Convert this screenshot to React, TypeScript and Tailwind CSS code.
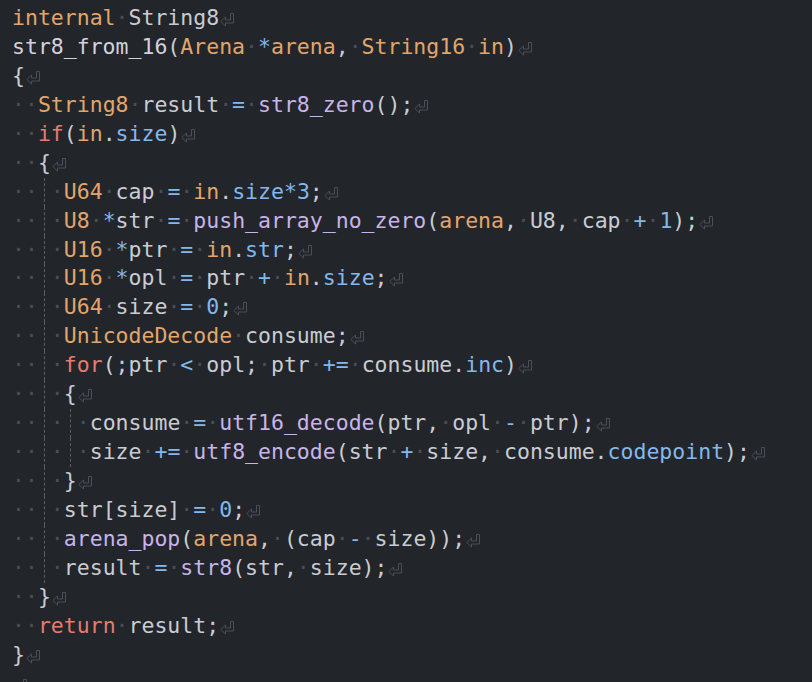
import React from "react";

type Seg = [string, string?];

const COLORS: Record<string, string> = {
  d: "text-[#c9ccd3]",
  h: "text-[#d3d2dc]",
  t: "text-[#e2a56c]",
  k: "text-[#e57c6f]",
  o: "text-[#84b8ec]",
  n: "text-[#84b8ec]",
  m: "text-[#84b8ec]",
  f: "text-[#c8b4e8]",
};

const LINES: Seg[][] = [
  [["internal", "t"], [" "], ["String8", "d"]],
  [["str8_from_16", "h"], ["(", "d"], ["Arena", "t"], [" "], ["*", "o"], ["arena", "t"], [",", "d"], [" "], ["String16", "t"], [" "], ["in", "t"], [")", "d"]],
  [["{", "d"]],
  [["  "], ["String8", "t"], [" "], ["result", "d"], [" "], ["=", "o"], [" "], ["str8_zero", "f"], ["();", "d"]],
  [["  "], ["if", "k"], ["(", "d"], ["in", "t"], [".", "d"], ["size", "m"], [")", "d"]],
  [["  "], ["{", "d"]],
  [["    "], ["U64", "t"], [" "], ["cap", "d"], [" "], ["=", "o"], [" "], ["in", "t"], [".", "d"], ["size", "m"], ["*", "o"], ["3", "n"], [";", "d"]],
  [["    "], ["U8", "t"], [" "], ["*", "o"], ["str", "d"], [" "], ["=", "o"], [" "], ["push_array_no_zero", "f"], ["(", "d"], ["arena", "t"], [",", "d"], [" "], ["U8,", "d"], [" "], ["cap", "d"], [" "], ["+", "o"], [" "], ["1", "n"], [");", "d"]],
  [["    "], ["U16", "t"], [" "], ["*", "o"], ["ptr", "d"], [" "], ["=", "o"], [" "], ["in", "t"], [".", "d"], ["str", "m"], [";", "d"]],
  [["    "], ["U16", "t"], [" "], ["*", "o"], ["opl", "d"], [" "], ["=", "o"], [" "], ["ptr", "d"], [" "], ["+", "o"], [" "], ["in", "t"], [".", "d"], ["size", "m"], [";", "d"]],
  [["    "], ["U64", "t"], [" "], ["size", "d"], [" "], ["=", "o"], [" "], ["0", "n"], [";", "d"]],
  [["    "], ["UnicodeDecode", "t"], [" "], ["consume;", "d"]],
  [["    "], ["for", "k"], ["(;ptr", "d"], [" "], ["<", "o"], [" "], ["opl;", "d"], [" "], ["ptr", "d"], [" "], ["+=", "o"], [" "], ["consume.", "d"], ["inc", "m"], [")", "d"]],
  [["    "], ["{", "d"]],
  [["      "], ["consume", "d"], [" "], ["=", "o"], [" "], ["utf16_decode", "f"], ["(ptr,", "d"], [" "], ["opl", "d"], [" "], ["-", "o"], [" "], ["ptr);", "d"]],
  [["      "], ["size", "d"], [" "], ["+=", "o"], [" "], ["utf8_encode", "f"], ["(str", "d"], [" "], ["+", "o"], [" "], ["size,", "d"], [" "], ["consume.", "d"], ["codepoint", "m"], [");", "d"]],
  [["    "], ["}", "d"]],
  [["    "], ["str[size]", "d"], [" "], ["=", "o"], [" "], ["0", "n"], [";", "d"]],
  [["    "], ["arena_pop", "f"], ["(", "d"], ["arena", "t"], [",", "d"], [" "], ["(cap", "d"], [" "], ["-", "o"], [" "], ["size));", "d"]],
  [["    "], ["result", "d"], [" "], ["=", "o"], [" "], ["str8", "f"], ["(str,", "d"], [" "], ["size);", "d"]],
  [["  "], ["}", "d"]],
  [["  "], ["return", "k"], [" "], ["result;", "d"]],
  [["}", "d"]],
  [],
];

function guidesFor(i: number): number[] {
  const g: number[] = [];
  if (i >= 6 && i <= 19) g.push(2);
  if (i >= 14 && i <= 15) g.push(4);
  return g;
}

function ReturnMark() {
  return (
    <svg width="14" height="14" viewBox="0 0 14 14" className="inline-block align-[-2px] ml-[1px]" fill="none">
      <path
        d="M10.5 0.5 H13.5 V10 H5.5 V13 L0.8 8.5 L5.5 4 V7 H10.5 Z"
        stroke="#4b4f58"
        strokeWidth="1"
        strokeLinejoin="miter"
      />
    </svg>
  );
}

function Line({ segs, index }: { segs: Seg[]; index: number }) {
  const guides = guidesFor(index);
  let col = 0;
  const out: React.ReactNode[] = [];
  segs.forEach(([text, key], si) => {
    if (!key) {
      for (let c = 0; c < text.length; c++) {
        const isGuide = guides.includes(col);
        out.push(
          <span key={`${si}-${c}`} className="text-[#4a4e57]">
            {isGuide ? "\u00a0" : "\u00b7"}
          </span>
        );
        col++;
      }
    } else {
      out.push(
        <span key={si} className={COLORS[key]}>
          {text}
        </span>
      );
      col += text.length;
    }
  });
  return (
    <div className="relative h-[28.95px] whitespace-pre">
      {guides.includes(2) && (
        <div className="absolute top-0 bottom-0 left-[calc(2.5ch-0.5px)] border-l border-dashed border-[#5a5e67]" />
      )}
      {guides.includes(4) && (
        <div className="absolute top-0 bottom-0 left-[calc(4.5ch-0.5px)] border-l border-dashed border-[#5a5e67]" />
      )}
      {out}
      <ReturnMark />
    </div>
  );
}

export default function App() {
  return (
    <div className="h-[682px] w-full overflow-hidden bg-[#22252a] pl-[12px] pt-[4px] font-['DejaVu_Sans_Mono',monospace] text-[21.5px] leading-[28.95px]">
      {LINES.map((segs, i) => (
        <Line key={i} segs={segs} index={i} />
      ))}
    </div>
  );
}
